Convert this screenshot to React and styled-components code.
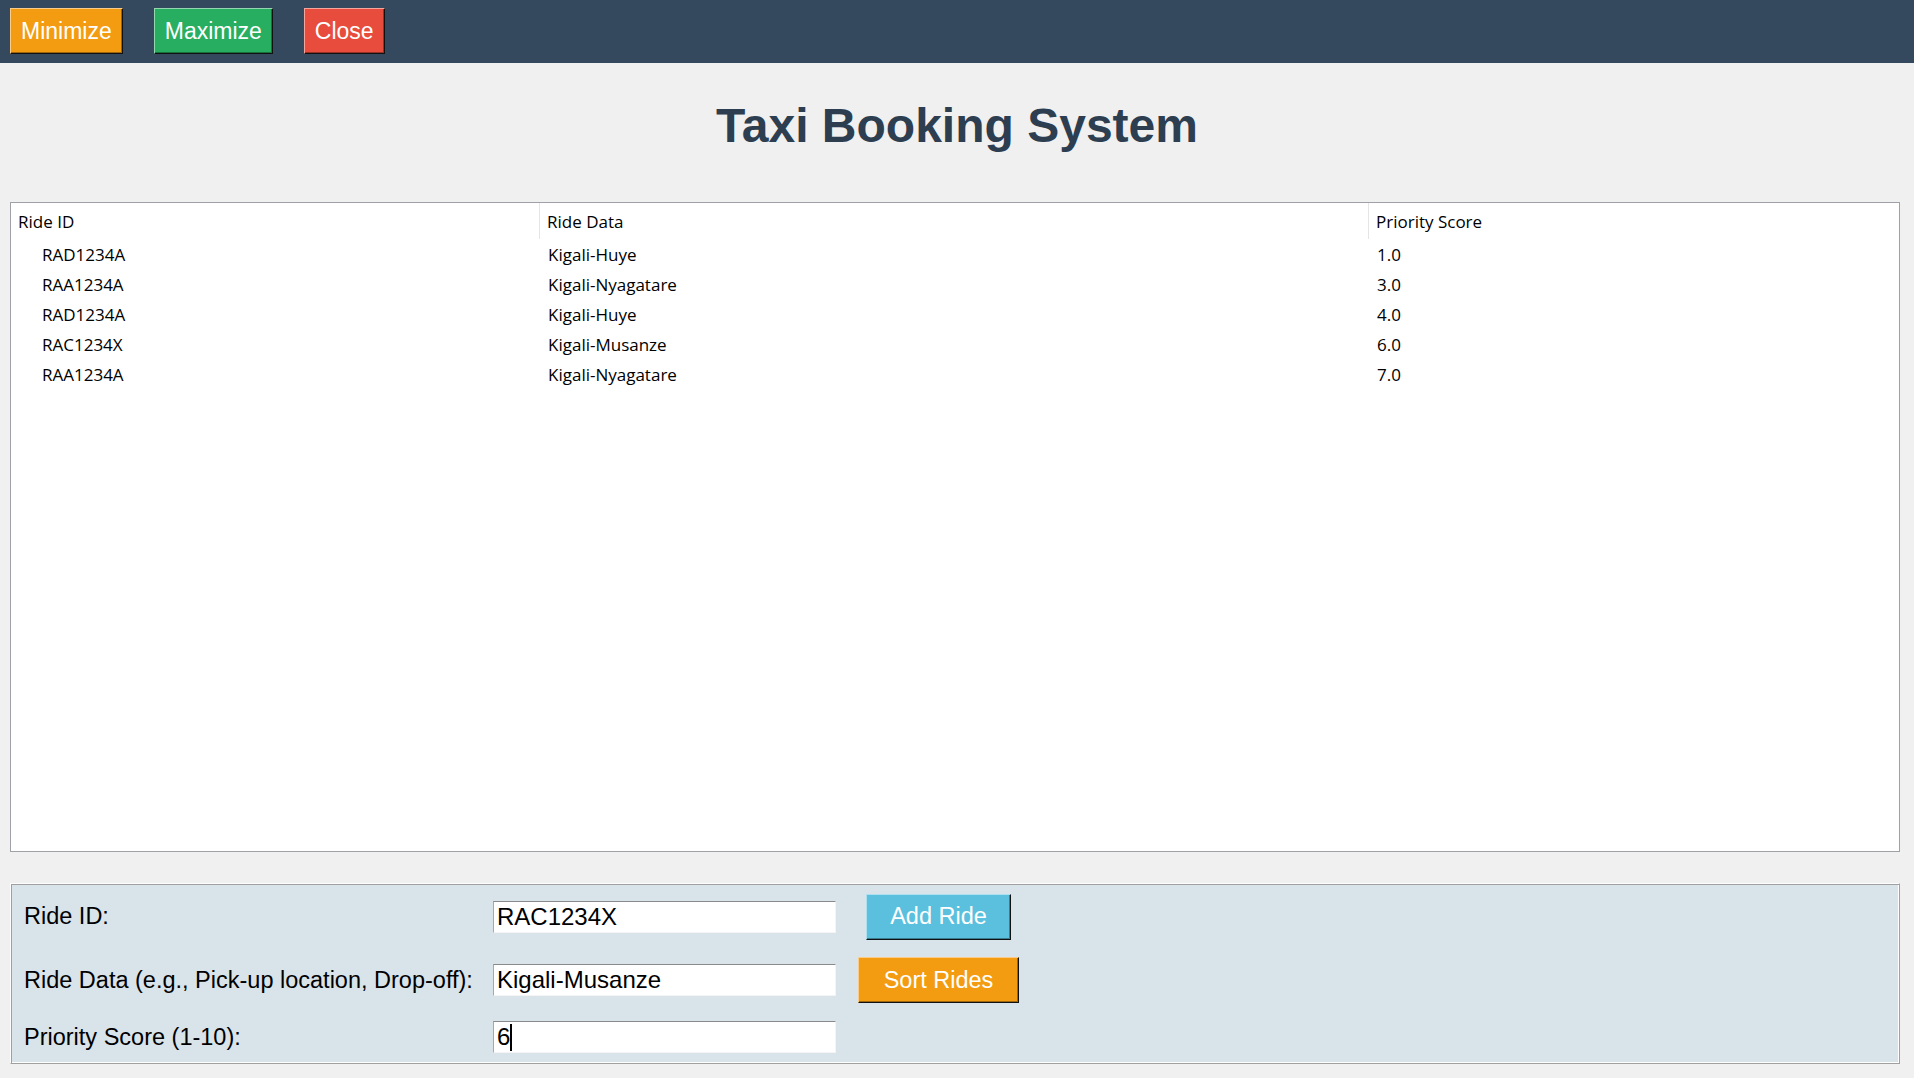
import styled, { createGlobalStyle } from 'styled-components';

const rides = [
    { id: 'RAD1234A', data: 'Kigali-Huye', score: '1.0' },
    { id: 'RAA1234A', data: 'Kigali-Nyagatare', score: '3.0' },
    { id: 'RAD1234A', data: 'Kigali-Huye', score: '4.0' },
    { id: 'RAC1234X', data: 'Kigali-Musanze', score: '6.0' },
    { id: 'RAA1234A', data: 'Kigali-Nyagatare', score: '7.0' },
];

const GlobalStyle = createGlobalStyle`
    html, body {
        margin: 0;
        padding: 0;
        background: #f0f0f0;
        overflow: hidden;
    }
    * {
        box-sizing: border-box;
    }
`;

const Window = styled.div`
    width: 1914px;
    height: 1078px;
    background: #f0f0f0;
    font-family: "Liberation Sans", Arial, sans-serif;
`;

const TopBar = styled.div`
    display: flex;
    gap: 31px;
    height: 63px;
    padding: 8px 10px;
    background: #34495e;
`;

const RaisedButton = styled.button`
    height: 46px;
    padding: 0 ${(p) => p.$padX || 10}px;
    background: ${(p) => p.$bg};
    color: #ffffff;
    font-family: "Liberation Sans", Arial, sans-serif;
    font-size: ${(p) => p.$size || 23}px;
    border-top: 1px solid rgba(255, 255, 255, 0.5);
    border-left: 1px solid rgba(255, 255, 255, 0.5);
    border-right: 1px solid #111;
    border-bottom: 1px solid #111;
    box-shadow: inset -1px -1px 0 rgba(0, 0, 0, 0.35);
    cursor: pointer;
`;

const Title = styled.h1`
    margin: 0;
    padding: 35px 0 48px;
    line-height: 56px;
    text-align: center;
    font-size: 48px;
    font-weight: bold;
    color: #2c3e50;
`;

const Content = styled.div`
    padding: 0 14px 0 10px;
`;

const Tree = styled.div`
    height: 650px;
    background: #ffffff;
    border: 1px solid #9ea2a6;
    font-family: "Open Sans", "Noto Sans", sans-serif;
    font-size: 17px;
    color: #000;
`;

const TreeGrid = styled.div`
    display: grid;
    grid-template-columns: 529px 829px 1fr;
    height: ${(p) => p.$h}px;
    align-items: center;
`;

const HeadCell = styled.div`
    height: 100%;
    display: flex;
    align-items: center;
    padding-left: 7px;
    border-right: ${(p) => (p.$last ? 'none' : '1px solid #e5e5e5')};
`;

const Cell = styled.div`
    padding-left: ${(p) => p.$indent || 8}px;
    white-space: nowrap;
`;

const FormPanel = styled.div`
    margin-top: 31px;
    height: 181px;
    display: grid;
    grid-template-columns: 481px 343px 205px;
    grid-template-rows: 63px 64px 50px;
    align-items: center;
    background: #d9e3ea;
    border-top: 1px solid #fdfdfd;
    border-left: 1px solid #fdfdfd;
    border-right: 1px solid #a0a0a0;
    border-bottom: 1px solid #a0a0a0;
    box-shadow: inset 1px 1px 0 #a0a0a0, inset -1px -1px 0 #ffffff;
    padding: 1px;
`;

const Label = styled.label`
    padding-left: 12px;
    font-size: 23.5px;
    color: #000;
    white-space: nowrap;
`;

const Entry = styled.div`
    height: 32px;
    display: flex;
    align-items: center;
    padding-left: 3px;
    background: #ffffff;
    border-top: 1px solid #8a8a8a;
    border-left: 1px solid #a8a8a8;
    border-right: 1px solid #f4f4f4;
    border-bottom: 1px solid #f4f4f4;
    font-size: 24px;
    color: #000;
`;

const Caret = styled.span`
    display: inline-block;
    width: 2px;
    height: 27px;
    background: #000;
`;

const ButtonCell = styled.div`
    display: flex;
    justify-content: center;
`;

const fields = [
    { label: 'Ride ID:', value: 'RAC1234X', button: { text: 'Add Ride', bg: '#5bc0de', padX: 23 } },
    { label: 'Ride Data (e.g., Pick-up location, Drop-off):', value: 'Kigali-Musanze', button: { text: 'Sort Rides', bg: '#f39c12', padX: 25 } },
    { label: 'Priority Score (1-10):', value: '6', caret: true },
];

export default function App() {
    return (
        <Window>
            <GlobalStyle />
            <TopBar>
                <RaisedButton $bg="#f39c12">Minimize</RaisedButton>
                <RaisedButton $bg="#27ae60">Maximize</RaisedButton>
                <RaisedButton $bg="#e74c3c">Close</RaisedButton>
            </TopBar>
            <Title>Taxi Booking System</Title>
            <Content>
                <Tree>
                    <TreeGrid $h={36}>
                        <HeadCell>Ride ID</HeadCell>
                        <HeadCell>Ride Data</HeadCell>
                        <HeadCell $last>Priority Score</HeadCell>
                    </TreeGrid>
                    {rides.map((r, i) => (
                        <TreeGrid $h={30} key={i}>
                            <Cell $indent={31}>{r.id}</Cell>
                            <Cell>{r.data}</Cell>
                            <Cell>{r.score}</Cell>
                        </TreeGrid>
                    ))}
                </Tree>
                <FormPanel>
                    {fields.map((f) => (
                        <>
                            <Label key={f.label + 'l'}>{f.label}</Label>
                            <Entry key={f.label + 'e'}>
                                {f.value}
                                {f.caret && <Caret />}
                            </Entry>
                            <ButtonCell key={f.label + 'b'}>
                                {f.button && (
                                    <RaisedButton $bg={f.button.bg} $padX={f.button.padX} $size={23.5}>
                                        {f.button.text}
                                    </RaisedButton>
                                )}
                            </ButtonCell>
                        </>
                    ))}
                </FormPanel>
            </Content>
        </Window>
    );
}
